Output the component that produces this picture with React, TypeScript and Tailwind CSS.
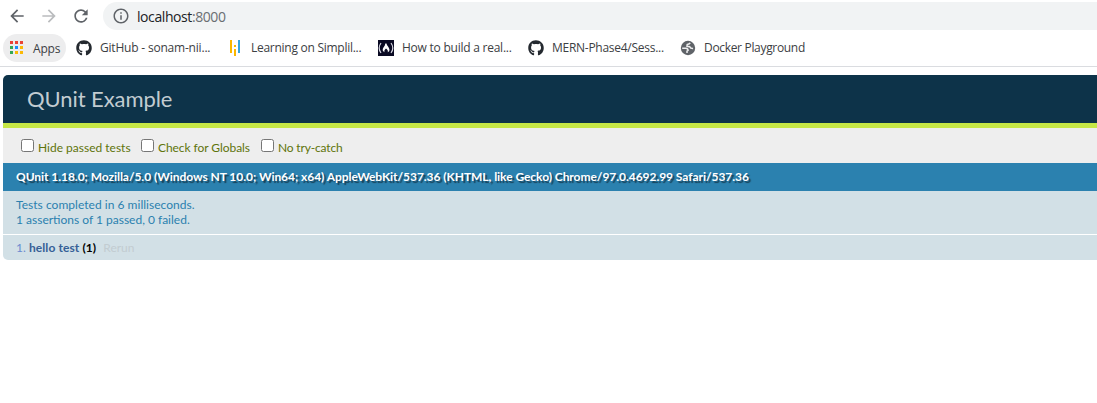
import type { ReactNode } from 'react';
import { FaGithub } from 'react-icons/fa';
import { MdArrowBack, MdArrowForward, MdRefresh, MdInfoOutline } from 'react-icons/md';

const appColors = [
  '#ea4335', '#ea4335', '#ea4335',
  '#34a853', '#1a8cff', '#fbb905',
  '#34a853', '#fbb905', '#fbb905',
];

function AppsIcon() {
  return (
    <svg className="-mt-px" width="13" height="13" viewBox="0 0 13 13" shapeRendering="crispEdges">
      {appColors.map((c, i) => (
        <rect key={i} x={(i % 3) * 5} y={Math.floor(i / 3) * 5} width="3" height="3" fill={c} />
      ))}
    </svg>
  );
}

function SimplilearnIcon() {
  return (
    <svg className="ml-[3px]" width="10" height="16" viewBox="0 0 10 16" shapeRendering="crispEdges">
      <path fill="#fbb800" d="M0 0h2v13H0zM4 5h2v2H4zM4 9h2v7H4z" />
      <path fill="#35a4de" d="M8 0h2v13H8z" />
    </svg>
  );
}

function CampIcon() {
  return (
    <svg width="16" height="16" viewBox="0 0 16 16">
      <rect width="16" height="16" fill="#0a0a23" />
      <path d="M3 3Q-.6 8 3 13M13 3q3.600 5 0 10" fill="none" stroke="#d8d8e2" strokeWidth="1.2" />
      <path d="M7.300 3.500h1.200c.2 2 2.500 3.700 2.900 5.700.3 1.500-.5 2.600-1.700 3 .5-1.300.2-2.300-1.700-3.700-1.500 1.300-2 2.400-1.400 3.700-1.500-.5-2.200-1.700-1.800-3.100.4-1.700 2.400-3.100 2.500-5.600z" fill="#fff" />
    </svg>
  );
}

function GlobeIcon() {
  return (
    <svg width="16" height="16" viewBox="0 0 16 16">
      <circle cx="8" cy="8" r="7.200" fill="#5f6368" />
      <path
        d="M2.200 8.300h3.600q2.200.1 2.300 2.100L7 11.200v1.900M10.200 2.800Q9.600 4 7.200 4.500L7 6.300l2.700.4q.7 2 3.400 1.900"
        fill="none"
        stroke="#eeeeef"
        strokeWidth="1.500"
      />
    </svg>
  );
}

function Bookmark({ icon, width, children }: { icon: ReactNode; width: string; children: ReactNode }) {
  return (
    <div className={`flex shrink-0 items-center ${width}`}>
      <span className="flex w-6 shrink-0 items-center">{icon}</span>
      <span className="mt-px whitespace-nowrap">{children}</span>
    </div>
  );
}

function Option({ width, children }: { width: string; children: ReactNode }) {
  return (
    <label className={`flex shrink-0 ${width}`}>
      <input type="checkbox" className="mt-[11px] mr-[4px] h-[13px] w-[13px] shrink-0 appearance-none rounded-[2.5px] border border-[#767676] bg-white" />
      <span className="mt-[12px] whitespace-nowrap leading-4">{children}</span>
    </label>
  );
}

export default function App() {
  return (
    <div className="h-[403px] w-full overflow-hidden bg-white">
      <div className="flex h-8 items-center font-['Open_Sans',sans-serif]">
        <MdArrowBack className="ml-[7px] size-5 text-[#5f6368]" />
        <MdArrowForward className="ml-3 size-5 text-[#babcbe]" />
        <MdRefresh className="ml-3 size-5 text-[#5f6368]" />
        <div className="ml-3 flex h-7 flex-1 items-center rounded-l-full bg-[#f1f3f4] pl-[9px]">
          <MdInfoOutline className="size-[18px] text-[#5f6368]" />
          <span className="ml-[7px] text-[14px] tracking-[-0.42px] text-[#202124]">
            localhost<span className="text-[#6a6e72]">:8000</span>
          </span>
        </div>
      </div>
      <div className="flex h-[35px] items-center border-b border-[#dadce0] pb-[3px] pl-[3px] font-['Open_Sans',sans-serif] text-[12px] tracking-[-0.2px] text-[#3c4043]">
        <div className="mt-px mr-[10px] flex h-7 w-[63px] shrink-0 items-center rounded-full bg-[#ededee] pl-[7px]">
          <AppsIcon />
          <span className="mt-px ml-[10px]">Apps</span>
        </div>
        <Bookmark width="w-[151px]" icon={<FaGithub className="size-4 text-[#24292f]" />}>GitHub - sonam-nii...</Bookmark>
        <Bookmark width="w-[151px] tracking-[-0.27px]" icon={<SimplilearnIcon />}>Learning on Simplil...</Bookmark>
        <Bookmark width="w-[150px] tracking-[-0.24px]" icon={<CampIcon />}>How to build a real...</Bookmark>
        <Bookmark width="w-[152px] tracking-[-0.27px]" icon={<FaGithub className="size-4 text-[#24292f]" />}>MERN-Phase4/Sess...</Bookmark>
        <Bookmark width="w-[140px] tracking-[-0.32px]" icon={<GlobeIcon />}>Docker Playground</Bookmark>
      </div>
      <main className="mt-2 ml-[3px] font-['Lato',sans-serif] text-[12px]">
        <h1 className="flex h-12 items-center rounded-tl-[5px] bg-[#0d3349] pb-px pl-6 text-[22px] tracking-[-0.08px] text-[#c2ccd1]">QUnit Example</h1>
        <div className="h-[5px] bg-[#c6e746]" />
        <div className="flex h-[35px] bg-[#eeeeee] pl-[18px] text-[#5e740b]">
          <Option width="w-[120px]">Hide passed tests</Option>
          <Option width="w-[120px] tracking-[-0.06px]">Check for Globals</Option>
          <Option width="w-[120px] tracking-[-0.16px]">No try-catch</Option>
        </div>
        <h2 className="flex h-7 items-center bg-[#2b81af] pl-[13px] font-bold tracking-[-0.047px] whitespace-nowrap text-white [text-shadow:rgba(0,0,0,0.5)_2px_2px_1px]">
          QUnit 1.18.0; Mozilla/5.0 (Windows NT 10.0; Win64; x64) AppleWebKit/537.36 (KHTML, like Gecko) Chrome/97.0.4692.99 Safari/537.36
        </h2>
        <div className="h-[43px] bg-[#d2e0e6] pt-[6px] pl-[13px] leading-[15px] text-[#2b81af]">
          <p className="tracking-[0.03px]">Tests completed in 6 milliseconds.</p>
          <p>1 assertions of 1 passed, 0 failed.</p>
        </div>
        <div className="mt-px flex h-[25px] items-center rounded-bl-[5px] bg-[#d2e0e6] pl-[13px] whitespace-pre text-[#6c8bd0]">
          <span>1. </span>
          <strong className="tracking-[0.1px] text-[#366097]">hello test <span className="text-black">(1)</span></strong>
          <span className="ml-[7px] text-[#c2ccd1]">Rerun</span>
        </div>
      </main>
    </div>
  );
}
